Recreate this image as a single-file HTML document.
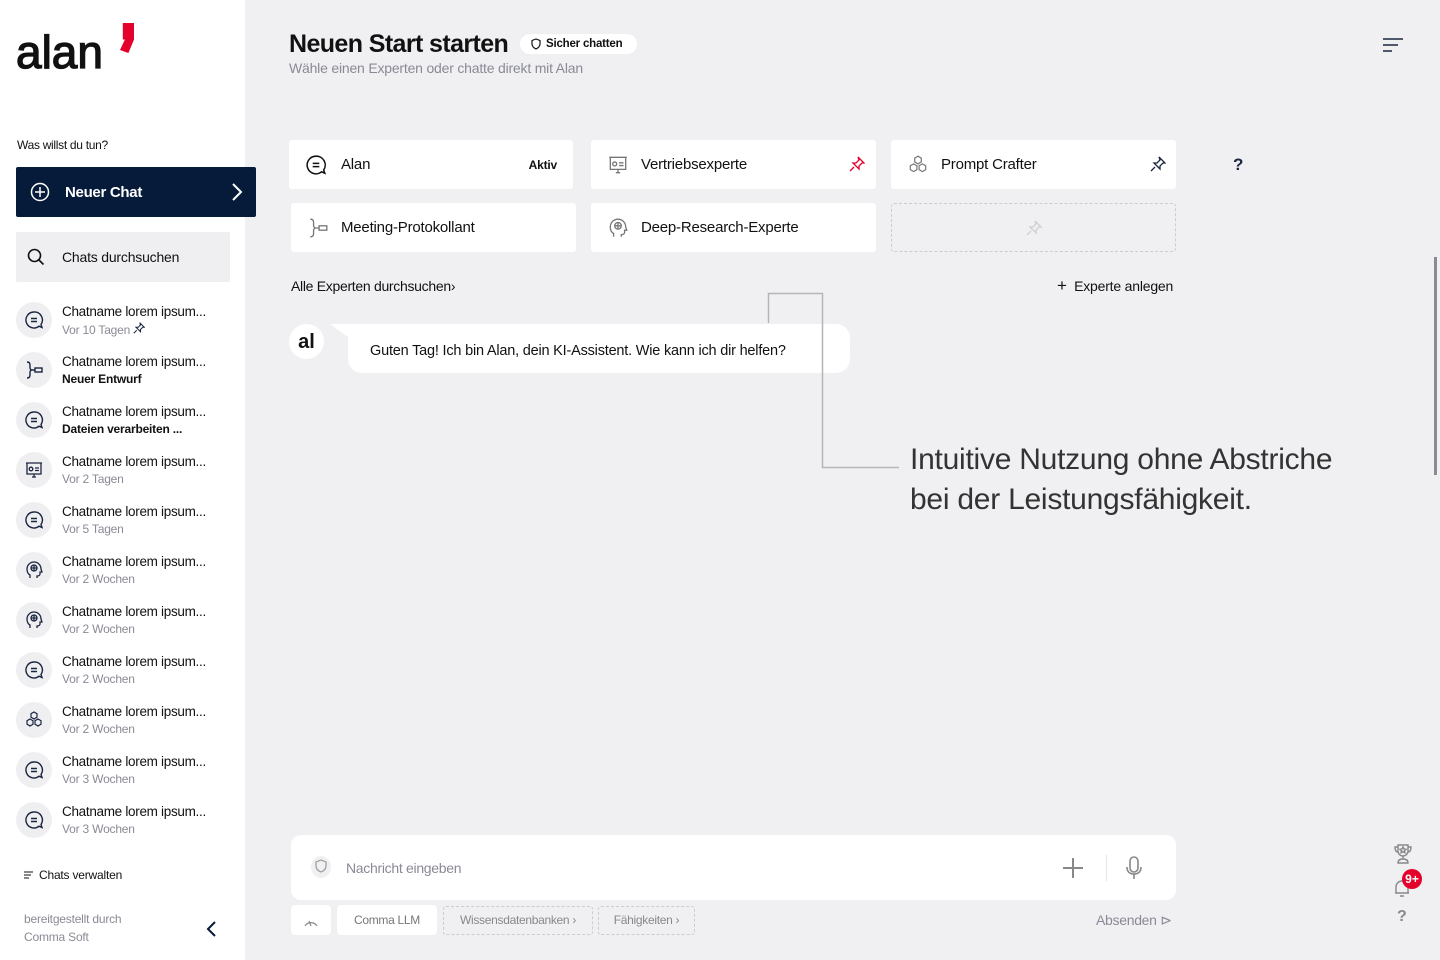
<!DOCTYPE html>
<html><head><meta charset="utf-8"><style>
*{margin:0;padding:0;box-sizing:border-box}
body{width:1440px;height:960px;overflow:hidden;background:#f0f0f3;font-family:"Liberation Sans",sans-serif;color:#111;position:relative}
.a{position:absolute}
.side{left:0;top:0;width:245px;height:960px;background:#fff}
.card{position:absolute;background:#fff;border-radius:3px;height:49px;display:flex;align-items:center;font-size:15px;color:#111;letter-spacing:-0.2px}
.card svg{position:absolute;left:16px;top:14px}
.card span{position:absolute;left:50px}
.it{position:absolute;left:16px;width:220px;height:40px}
.ic{position:absolute;left:0;top:0;width:36px;height:36px;border-radius:50%;background:#efeff2}
.ic svg{position:absolute;left:8px;top:8px}
.t{position:absolute;left:46px;top:0;font-size:13.5px;color:#111;white-space:nowrap;letter-spacing:-0.3px}
.s{position:absolute;left:46px;top:18px;font-size:12px;color:#8a8a96;white-space:nowrap;letter-spacing:-0.2px}
.s b{color:#111}
</style></head><body>
<div class="a side">
 <div class="a" style="left:16px;top:26px;font-size:46px;font-weight:400;letter-spacing:0px;color:#111;line-height:52px;-webkit-text-stroke:1.3px #111">alan</div>
 <div class="a" style="left:120px;top:23px;width:14px;height:30px;background:#e4002b;clip-path:polygon(20% 0,100% 0,100% 55%,60% 100%,0 90%,35% 55%,20% 55%)"></div>
 <div class="a" style="left:17px;top:138px;font-size:12px;letter-spacing:-0.3px">Was willst du tun?</div>
 <div class="a" style="left:16px;top:167px;width:240px;height:50px;background:#061a3a;border-radius:2px;color:#fff">
  <svg class="a" style="left:14px;top:15px" width="20" height="20" viewBox="0 0 20 20" fill="none" stroke="#fff" stroke-width="1.5"><circle cx="10" cy="10" r="8.5"/><path d="M10 5v10M5 10h10"/></svg>
  <div class="a" style="left:49px;top:17px;font-size:15px;font-weight:bold;letter-spacing:-0.3px">Neuer Chat</div>
  <svg class="a" style="left:214px;top:15px" width="14" height="20" viewBox="0 0 14 20" fill="none" stroke="#fff" stroke-width="2"><path d="M3 2l8 8-8 8"/></svg>
 </div>
 <div class="a" style="left:16px;top:232px;width:214px;height:50px;background:#efeff2;border-radius:2px">
  <svg class="a" style="left:11px;top:16px" width="18" height="18" viewBox="0 0 18 18" fill="none" stroke="#111" stroke-width="1.6"><circle cx="7.5" cy="7.5" r="6"/><path d="M12 12l4.5 4.5"/></svg>
  <div class="a" style="left:46px;top:17px;font-size:14px;letter-spacing:-0.2px">Chats durchsuchen</div>
 </div>
 <svg class="a" style="left:24px;top:871px" width="10" height="8" viewBox="0 0 10 8" stroke="#111" stroke-width="1.1"><path d="M0 1h9M0 4h7M0 7h5"/></svg>
 <div class="a" style="left:39px;top:868px;font-size:12px;letter-spacing:-0.2px">Chats verwalten</div>
 <div class="a" style="left:24px;top:910px;font-size:12px;color:#8a8a96;line-height:18px;letter-spacing:-0.2px">bereitgestellt durch<br>Comma Soft</div>
 <svg class="a" style="left:205px;top:920px" width="12" height="18" viewBox="0 0 12 18" fill="none" stroke="#061a3a" stroke-width="2"><path d="M10 2L3 9l7 7"/></svg>
</div>
<!-- sidebar items -->
<div class="it" style="top:302px"><div class="ic"><svg width="20" height="20" viewBox="0 0 20 20" fill="none" stroke="#1a2540" stroke-width="1.4"><path d="M10 2a8 8 0 1 0 5 14.2l3 1.3-1-3A8 8 0 0 0 10 2z"/><path d="M7 8.5h6M7 11.5h6"/></svg></div><div class="t" style="top:2px">Chatname lorem ipsum...</div><div class="s" style="top:20px">Vor 10 Tagen <svg width="12" height="12" viewBox="0 0 16 16" fill="none" stroke="#1a2540" stroke-width="1.4"><path d="M9 1l6 6-2 0-3 3 0 3-6-6 3 0 3-3zM5 11l-4 4"/></svg></div></div>
<div class="it" style="top:352px"><div class="ic"><svg width="20" height="20" viewBox="0 0 20 20" fill="none" stroke="#1a2540" stroke-width="1.4"><path d="M3 2c3 0 3 2 3 4v2c0 1 1 2 2 2-1 0-2 1-2 2v2c0 2 0 4-3 4M8 10h3"/><rect x="11" y="8" width="7" height="4"/></svg></div><div class="t" style="top:2px">Chatname lorem ipsum...</div><div class="s" style="top:20px"><b>Neuer Entwurf</b></div></div>
<div class="it" style="top:402px"><div class="ic"><svg width="20" height="20" viewBox="0 0 20 20" fill="none" stroke="#1a2540" stroke-width="1.4"><path d="M10 2a8 8 0 1 0 5 14.2l3 1.3-1-3A8 8 0 0 0 10 2z"/><path d="M7 8.5h6M7 11.5h6"/></svg></div><div class="t" style="top:2px">Chatname lorem ipsum...</div><div class="s" style="top:20px"><b>Dateien verarbeiten ...</b></div></div>
<div class="it" style="top:452px"><div class="ic"><svg width="20" height="20" viewBox="0 0 20 20" fill="none" stroke="#1a2540" stroke-width="1.3"><path d="M2 3h16M3 3v11h14V3M10 14v3M8 17h4"/><circle cx="7" cy="9" r="1.8"/><path d="M11 8h4M11 10.5h4"/></svg></div><div class="t" style="top:2px">Chatname lorem ipsum...</div><div class="s" style="top:20px">Vor 2 Tagen</div></div>
<div class="it" style="top:502px"><div class="ic"><svg width="20" height="20" viewBox="0 0 20 20" fill="none" stroke="#1a2540" stroke-width="1.4"><path d="M10 2a8 8 0 1 0 5 14.2l3 1.3-1-3A8 8 0 0 0 10 2z"/><path d="M7 8.5h6M7 11.5h6"/></svg></div><div class="t" style="top:2px">Chatname lorem ipsum...</div><div class="s" style="top:20px">Vor 5 Tagen</div></div>
<div class="it" style="top:552px"><div class="ic"><svg width="20" height="20" viewBox="0 0 20 20" fill="none" stroke="#1a2540" stroke-width="1.3"><path d="M6 18v-3c-2-1-3-3-3-6a7 7 0 0 1 14 0l1 3h-2v2c0 1-1 2-3 2v2"/><circle cx="10" cy="8" r="3"/><path d="M7 8h6M10 5v6"/></svg></div><div class="t" style="top:2px">Chatname lorem ipsum...</div><div class="s" style="top:20px">Vor 2 Wochen</div></div>
<div class="it" style="top:602px"><div class="ic"><svg width="20" height="20" viewBox="0 0 20 20" fill="none" stroke="#1a2540" stroke-width="1.3"><path d="M6 18v-3c-2-1-3-3-3-6a7 7 0 0 1 14 0l1 3h-2v2c0 1-1 2-3 2v2"/><circle cx="10" cy="8" r="3"/><path d="M7 8h6M10 5v6"/></svg></div><div class="t" style="top:2px">Chatname lorem ipsum...</div><div class="s" style="top:20px">Vor 2 Wochen</div></div>
<div class="it" style="top:652px"><div class="ic"><svg width="20" height="20" viewBox="0 0 20 20" fill="none" stroke="#1a2540" stroke-width="1.4"><path d="M10 2a8 8 0 1 0 5 14.2l3 1.3-1-3A8 8 0 0 0 10 2z"/><path d="M7 8.5h6M7 11.5h6"/></svg></div><div class="t" style="top:2px">Chatname lorem ipsum...</div><div class="s" style="top:20px">Vor 2 Wochen</div></div>
<div class="it" style="top:702px"><div class="ic"><svg width="20" height="20" viewBox="0 0 20 20" fill="none" stroke="#1a2540" stroke-width="1.2"><path d="M10 2l3 1.7v3.5L10 9 7 7.2V3.7zM6 9l3 1.7v3.5L6 16l-3-1.8v-3.5zM14 9l3 1.7v3.5L14 16l-3-1.8v-3.5z"/></svg></div><div class="t" style="top:2px">Chatname lorem ipsum...</div><div class="s" style="top:20px">Vor 2 Wochen</div></div>
<div class="it" style="top:752px"><div class="ic"><svg width="20" height="20" viewBox="0 0 20 20" fill="none" stroke="#1a2540" stroke-width="1.4"><path d="M10 2a8 8 0 1 0 5 14.2l3 1.3-1-3A8 8 0 0 0 10 2z"/><path d="M7 8.5h6M7 11.5h6"/></svg></div><div class="t" style="top:2px">Chatname lorem ipsum...</div><div class="s" style="top:20px">Vor 3 Wochen</div></div>
<div class="it" style="top:802px"><div class="ic"><svg width="20" height="20" viewBox="0 0 20 20" fill="none" stroke="#1a2540" stroke-width="1.4"><path d="M10 2a8 8 0 1 0 5 14.2l3 1.3-1-3A8 8 0 0 0 10 2z"/><path d="M7 8.5h6M7 11.5h6"/></svg></div><div class="t" style="top:2px">Chatname lorem ipsum...</div><div class="s" style="top:20px">Vor 3 Wochen</div></div>

<!-- header -->
<div class="a" style="left:289px;top:30px;font-size:25px;font-weight:bold;letter-spacing:-0.6px">Neuen Start starten</div>
<div class="a" style="left:520px;top:34px;width:117px;height:20px;background:#fff;border-radius:10px;font-size:11.5px;font-weight:bold;line-height:20px;padding-left:26px;letter-spacing:-0.2px">Sicher chatten
 <svg class="a" style="left:11px;top:4px" width="10" height="12" viewBox="0 0 10 12" fill="none" stroke="#111" stroke-width="1.2"><path d="M5 1L1 2.5V6c0 2.5 2 4 4 5 2-1 4-2.5 4-5V2.5z"/></svg></div>
<div class="a" style="left:289px;top:60px;font-size:14px;color:#8a8a96;letter-spacing:-0.2px">Wähle einen Experten oder chatte direkt mit Alan</div>
<svg class="a" style="left:1382px;top:37px" width="22" height="16" viewBox="0 0 22 16" stroke="#1a2540" stroke-width="1.6"><path d="M1 2h20M1 8h15M1 14h9"/></svg>

<!-- cards -->
<div class="card" style="left:289px;top:140px;width:284px"><svg width="22" height="22" viewBox="0 0 20 20" fill="none" stroke="#111" stroke-width="1.4"><path d="M10 2a8 8 0 1 0 5 14.2l3 1.3-1-3A8 8 0 0 0 10 2z"/><path d="M7 8.5h6M7 11.5h6"/></svg><span style="left:52px">Alan</span><b class="a" style="right:16px;font-size:12px">Aktiv</b></div>
<div class="card" style="left:591px;top:140px;width:285px"><svg width="22" height="22" viewBox="0 0 20 20" fill="none" stroke="#777" stroke-width="1.2"><path d="M2 3h16M3 3v11h14V3M10 14v3M8 17h4"/><circle cx="7" cy="9" r="1.8"/><path d="M11 8h4M11 10.5h4"/></svg><span>Vertriebsexperte</span><svg class="a" style="left:258px;top:16px" width="16" height="16" viewBox="0 0 16 16" fill="none" stroke="#e4002b" stroke-width="1.3"><path d="M9 1l6 6-2 0-3 3 0 3-6-6 3 0 3-3zM5 11l-4 4"/></svg></div>
<div class="card" style="left:891px;top:140px;width:285px"><svg width="22" height="22" viewBox="0 0 20 20" fill="none" stroke="#777" stroke-width="1.1"><path d="M10 2l3 1.7v3.5L10 9 7 7.2V3.7zM6 9l3 1.7v3.5L6 16l-3-1.8v-3.5zM14 9l3 1.7v3.5L14 16l-3-1.8v-3.5z"/></svg><span>Prompt Crafter</span><svg class="a" style="left:259px;top:16px" width="16" height="16" viewBox="0 0 16 16" fill="none" stroke="#1a2540" stroke-width="1.3"><path d="M9 1l6 6-2 0-3 3 0 3-6-6 3 0 3-3zM5 11l-4 4"/></svg></div>
<div class="a" style="left:1233px;top:155px;font-size:17px;font-weight:bold;color:#1a2540">?</div>
<div class="card" style="left:291px;top:203px;width:285px"><svg width="22" height="22" viewBox="0 0 20 20" fill="none" stroke="#777" stroke-width="1.2"><path d="M3 2c3 0 3 2 3 4v2c0 1 1 2 2 2-1 0-2 1-2 2v2c0 2 0 4-3 4M8 10h3"/><rect x="11" y="8" width="7" height="4"/></svg><span>Meeting-Protokollant</span></div>
<div class="card" style="left:591px;top:203px;width:285px"><svg width="22" height="22" viewBox="0 0 20 20" fill="none" stroke="#777" stroke-width="1.2"><path d="M6 18v-3c-2-1-3-3-3-6a7 7 0 0 1 14 0l1 3h-2v2c0 1-1 2-3 2v2"/><circle cx="10" cy="8" r="3"/><path d="M7 8h6M10 5v6"/></svg><span>Deep-Research-Experte</span></div>
<div class="a" style="left:891px;top:203px;width:285px;height:49px;border:1px dashed #ccc;border-radius:3px"><svg class="a" style="left:134px;top:16px" width="16" height="16" viewBox="0 0 16 16" fill="none" stroke="#ccc" stroke-width="1.2"><path d="M9 1l6 6-2 0-3 3 0 3-6-6 3 0 3-3zM5 11l-4 4"/></svg></div>
<div class="a" style="left:291px;top:278px;font-size:14px;letter-spacing:-0.3px">Alle Experten durchsuchen›</div>
<div class="a" style="left:1057px;top:278px;font-size:14px;letter-spacing:-0.2px"><span style="font-size:17px;line-height:14px">+</span>&nbsp; Experte anlegen</div>

<!-- annotation -->
<svg class="a" style="left:0;top:0" width="1440" height="960" fill="none" stroke="#b5b5b8" stroke-width="1.5"><path d="M768.5 323V293.5H822.5V467.5H899"/></svg>

<!-- chat -->
<div class="a" style="left:289px;top:324px;width:35px;height:35px;border-radius:50%;background:#fff;font-size:20px;font-weight:bold;text-align:center;line-height:36px">al</div>
<div class="a" style="left:348px;top:324px;width:502px;height:49px;background:#fff;border-radius:14px;font-size:14.5px;line-height:54px;padding-left:22px;letter-spacing:-0.2px">Guten Tag! Ich bin Alan, dein KI-Assistent. Wie kann ich dir helfen?</div>
<div class="a" style="left:330px;top:324px;width:30px;height:22px;background:#fff;clip-path:polygon(0 0,100% 0,100% 100%)"></div>
<svg class="a" style="left:0;top:0" width="1440" height="960" fill="none" stroke="#b5b5b8" stroke-width="1.5"><path d="M822.5 324V373"/></svg>

<div class="a" style="left:910px;top:440px;font-size:30px;color:#333;line-height:40px;letter-spacing:-0.25px">Intuitive Nutzung ohne Abstriche<br>bei der Leistungsfähigkeit.</div>

<div class="a" style="left:1434px;top:257px;width:3px;height:218px;background:#8a8a96"></div>

<!-- input -->
<div class="a" style="left:291px;top:835px;width:885px;height:65px;background:#fff;border-radius:10px">
 <div class="a" style="left:20px;top:21px;width:20px;height:22px;border-radius:50%;background:#f0f0f3"></div>
 <svg class="a" style="left:24px;top:24px" width="12" height="14" viewBox="0 0 12 14" fill="none" stroke="#999" stroke-width="1.2"><path d="M6 1L1 3v4c0 3 2.5 5 5 6 2.5-1 5-3 5-6V3z"/></svg>
 <div class="a" style="left:55px;top:25px;font-size:14px;color:#8a8a96;letter-spacing:-0.3px">Nachricht eingeben</div>
 <svg class="a" style="left:771px;top:22px" width="22" height="22" viewBox="0 0 22 22" stroke="#888" stroke-width="2"><path d="M11 1v20M1 11h20"/></svg>
 <div class="a" style="left:815px;top:20px;width:1px;height:26px;background:#e5e5e8"></div>
 <svg class="a" style="left:835px;top:20px" width="16" height="26" viewBox="0 0 16 26" fill="none" stroke="#888" stroke-width="1.6"><rect x="4" y="2" width="8" height="15" rx="4"/><path d="M1 12c0 5 3 7 7 7s7-2 7-7M8 19v5"/></svg>
</div>
<div class="a" style="left:291px;top:905px;width:40px;height:30px;background:#fff;border-radius:4px"><svg class="a" style="left:12px;top:10px" width="16" height="12" viewBox="0 0 16 12" fill="none" stroke="#888" stroke-width="1.2"><path d="M2 11A7 7 0 0 1 14 11M8 11l-2-5"/></svg></div>
<div class="a" style="left:337px;top:905px;width:100px;height:30px;background:#fff;border-radius:4px;font-size:12px;color:#777;text-align:center;line-height:30px;letter-spacing:-0.3px">Comma LLM</div>
<div class="a" style="left:443px;top:906px;width:150px;height:29px;border:1px dashed #ccc;border-radius:3px;font-size:12px;color:#888;text-align:center;line-height:27px;letter-spacing:-0.3px">Wissensdatenbanken ›</div>
<div class="a" style="left:598px;top:906px;width:97px;height:29px;border:1px dashed #ccc;border-radius:3px;font-size:12px;color:#888;text-align:center;line-height:27px;letter-spacing:-0.3px">Fähigkeiten ›</div>
<div class="a" style="left:1096px;top:912px;font-size:14px;color:#8a8a96;letter-spacing:-0.3px">Absenden ⊳</div>

<!-- right icons -->
<svg class="a" style="left:1393px;top:843px" width="20" height="22" viewBox="0 0 20 22" fill="none" stroke="#888" stroke-width="1.4"><path d="M5 2h10v6a5 5 0 0 1-10 0zM5 4H2c0 3 1 5 3 5M15 4h3c0 3-1 5-3 5M10 13v3M5 20c0-3 2-4 5-4s5 1 5 4z"/><path d="M10 4l1 2 2 .3-1.5 1.4.4 2L10 8.7 8.1 9.7l.4-2L7 6.3 9 6z"/></svg>
<svg class="a" style="left:1393px;top:878px" width="18" height="20" viewBox="0 0 18 20" fill="none" stroke="#888" stroke-width="1.4"><path d="M3 15V9a6 6 0 0 1 12 0v6H2h14M7 18h4"/></svg>
<div class="a" style="left:1402px;top:869px;width:20px;height:20px;border-radius:50%;background:#e4002b;color:#fff;font-size:12px;font-weight:bold;text-align:center;line-height:20px">9+</div>
<div class="a" style="left:1397px;top:908px;font-size:16px;font-weight:bold;color:#888">?</div>
</body></html>
